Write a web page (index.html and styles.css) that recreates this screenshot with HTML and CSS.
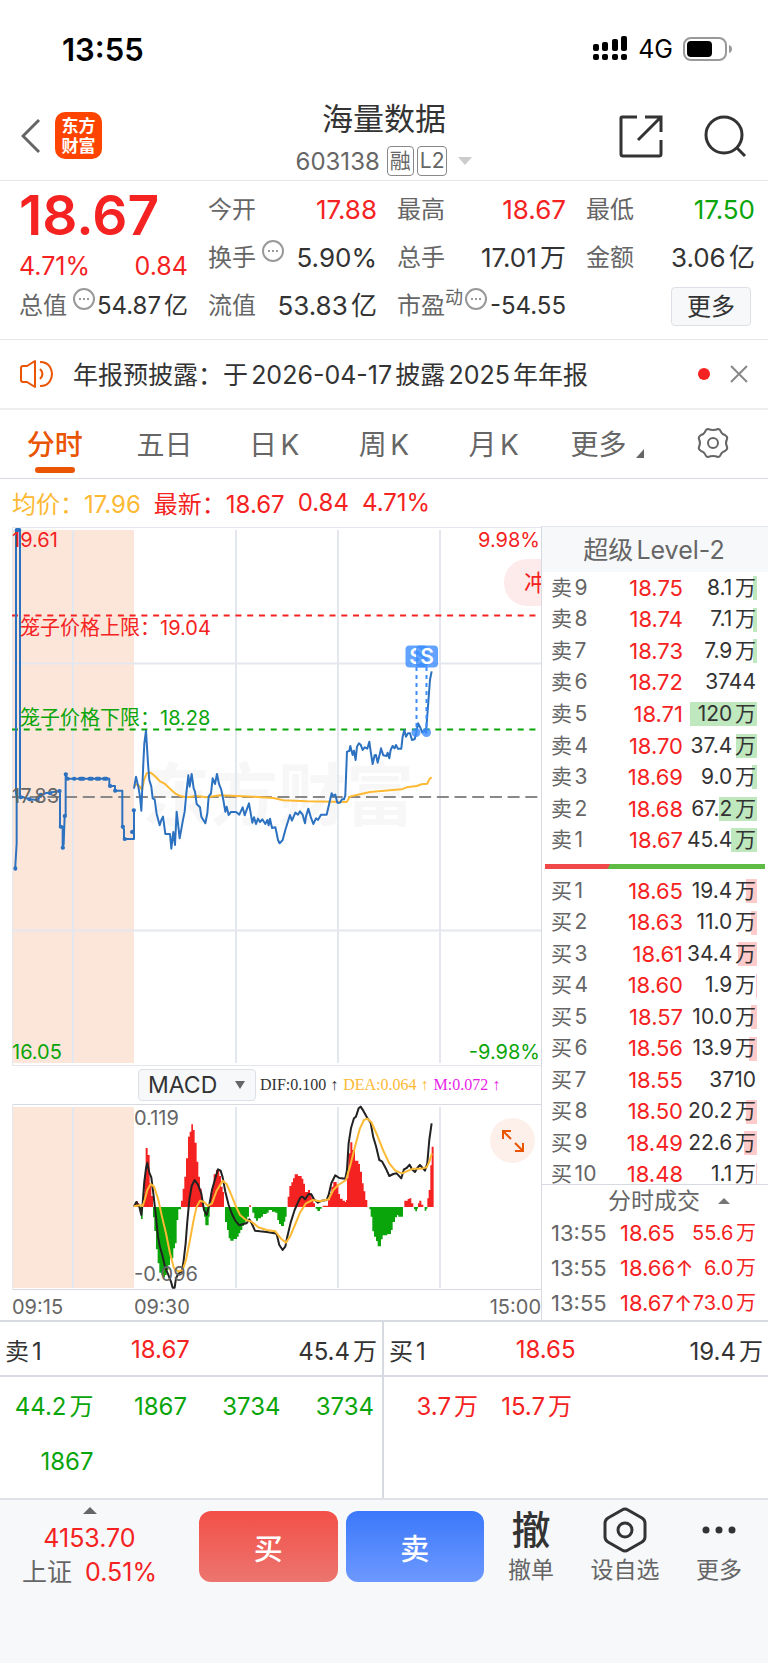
FILE: index.html
```html
<!DOCTYPE html>
<html lang="zh-CN">
<head>
    <meta charset="UTF-8">
    <meta name="viewport" content="width=device-width, initial-scale=1.0">
    <title>海量数据 603138</title>
    <link rel="stylesheet" href="styles.css">
</head>
<body>
    <div class="status">
        <span class="clock">13:55</span>
        <div class="status-right">
            <svg class="signal" viewBox="0 0 35 26" aria-hidden="true">
                <rect x="0" y="8" width="6" height="7" rx="2"/><rect x="9" y="6" width="6" height="9" rx="2"/><rect x="19" y="3" width="6" height="12" rx="2"/><rect x="28" y="0" width="6" height="15" rx="2"/>
                <rect x="0" y="18" width="6" height="6" rx="2"/><rect x="9" y="18" width="6" height="6" rx="2"/><rect x="19" y="18" width="6" height="6" rx="2"/><rect x="28" y="18" width="6" height="6" rx="2"/>
            </svg>
            <span class="network">4G</span>
            <svg class="battery" viewBox="0 0 49 24" aria-hidden="true">
                <rect x="1" y="1" width="42" height="22" rx="7" fill="none" stroke="#999" stroke-width="2"/>
                <rect x="4" y="4" width="25" height="16" rx="4"/>
                <path d="M46 8q3 1 3 4t-3 4z" fill="#999"/>
            </svg>
        </div>
    </div>

    <header class="header">
        <div class="header-side">
            <button class="icon-button back" aria-label="返回">
                <svg width="20" height="36" viewBox="0 0 20 36"><path d="M18 2L2 18l16 16" fill="none" stroke="#666" stroke-width="3"/></svg>
            </button>
            <div class="logo"><span>东方</span><span>财富</span></div>
        </div>
        <div class="stock">
            <h1 class="stock-name">海量数据</h1>
            <div class="stock-code">
                <span class="stock-number">603138</span><span class="badge">融</span><span class="badge">L2</span>
                <svg class="stock-arrow" width="14" height="8" viewBox="0 0 14 8"><path d="M0 0h14L7 8z" fill="#ccc"/></svg>
            </div>
        </div>
        <div class="header-side header-actions">
            <button class="icon-button" aria-label="分享">
                <svg width="44" height="44" viewBox="0 0 44 44" fill="none" stroke="#333" stroke-width="3"><path d="M18 3H3q-1 0-1 1v36q0 2 2 2h36q2 0 2-2V26M26 3h16v15M42 3L19 26"/></svg>
            </button>
            <button class="icon-button" aria-label="搜索">
                <svg width="44" height="44" viewBox="0 0 44 44" fill="none" stroke="#333" stroke-width="3"><circle cx="21" cy="21" r="18"/><path d="M33 33l9 9"/></svg>
            </button>
        </div>
    </header>

    <section class="quote">
        <div class="quote-col">
            <div class="price red">18.67</div>
            <div class="quote-change red"><span>4.71%</span><span>0.84</span></div>
            <div class="quote-row small"><span class="label">总值<svg class="more-dot" viewBox="0 0 22 22"><circle cx="11" cy="11" r="10"/><path d="M6 11h2M10 11h2M14 11h2"/></svg></span><span>54.87亿</span></div>
        </div>
        <div class="quote-col">
            <div class="quote-row"><span class="label">今开</span><span class="red">17.88</span></div>
            <div class="quote-row"><span class="label">换手<svg class="more-dot wide" viewBox="0 0 22 22"><circle cx="11" cy="11" r="10"/><path d="M6 11h2M10 11h2M14 11h2"/></svg></span><span>5.90%</span></div>
            <div class="quote-row"><span class="label">流值</span><span>53.83亿</span></div>
        </div>
        <div class="quote-col">
            <div class="quote-row"><span class="label">最高</span><span class="red">18.67</span></div>
            <div class="quote-row"><span class="label">总手</span><span>17.01万</span></div>
            <div class="quote-row small"><span class="label">市盈<sup>动</sup><svg class="more-dot tight" viewBox="0 0 22 22"><circle cx="11" cy="11" r="10"/><path d="M6 11h2M10 11h2M14 11h2"/></svg></span><span>-54.55</span></div>
        </div>
        <div class="quote-col">
            <div class="quote-row"><span class="label">最低</span><span class="green">17.50</span></div>
            <div class="quote-row"><span class="label">金额</span><span>3.06亿</span></div>
            <div class="quote-row quote-more"><button class="more-button">更多</button></div>
        </div>
    </section>

    <section class="notice">
        <svg width="34" height="30" viewBox="0 0 34 30" fill="none" stroke="#ea5504" stroke-width="2"><path d="M15 2v26l-8-5H3q-2 0-2-2V9q0-2 2-2h4z" stroke-linejoin="round"/><path d="M20 10q5 5 0 10M20 3q7 0 10 5 4 7 0 14-3 5-10 5"/></svg>
        <span class="notice-text">年报预披露：于2026-04-17披露2025年年报</span>
        <span class="notice-dot"></span>
        <button class="icon-button" aria-label="关闭">
            <svg width="18" height="18" viewBox="0 0 18 18" stroke="#888" stroke-width="2"><path d="M1 1l16 16M17 1L1 17"/></svg>
        </button>
    </section>

    <nav class="tabs">
        <button class="tab active">分时</button>
        <button class="tab">五日</button>
        <button class="tab">日K</button>
        <button class="tab">周K</button>
        <button class="tab">月K</button>
        <button class="tab tab-more">更多<svg width="8" height="9" viewBox="0 0 8 9"><path d="M8 0v9H0z" fill="#666"/></svg></button>
        <button class="tab" aria-label="设置">
            <svg width="34" height="34" viewBox="0 0 34 34" fill="none" stroke="#666" stroke-width="2"><path d="M12 3q5 2 10 0 2 0 3 3 1 2 4 3 3 2 2 4-2 4 0 8 1 2-2 4-3 1-4 3-1 3-3 3-5-2-10 0-2 0-3-3-1-2-4-3-3-2-2-4 2-4 0-8-1-2 2-4 3-1 4-3 1-3 3-3z"/><circle cx="17" cy="17" r="5"/></svg>
        </button>
    </nav>

    <div class="summary">
        <span class="amber">均价：17.96</span>
        <span class="red">最新：18.67</span>
        <span class="red">0.84</span>
        <span class="red">4.71%</span>
    </div>

    <main class="board">
        <div class="charts">
            <svg class="chart" viewBox="0 0 529 540">
                <rect x="0" y="4" width="122" height="533" fill="#fce6da"/>
                <text x="130" y="294" class="watermark">东方财富</text>
                <g class="grid">
                    <path d="M0 1.500H529M0 539.500H529M.5 1V540"/>
                    <path d="M61 4V537M224 4V537M326 4V537M428 4V537M0 137.500H529M0 404.500H529" stroke-width="2"/>
                </g>
                <path d="M0 89.500H527" class="limit" stroke="#f52222"/>
                <path d="M0 203.500H527" class="limit" stroke="#0aa50a"/>
                <path d="M0 271H527" stroke="#888" stroke-width="2" stroke-dasharray="12 5.700"/>

                <g transform="translate(-12 -16) scale(.3333)">
                    <path class="line pre" d="M46 1075L46 1068 50 1000 50 862 48 850V60H60V862L70 862 90 868 112 870 120 860 135 850 180 843V950H188V1013L191 1003 194 918 197 915V793L202 806H328V828H345V842H367V950L372 958V987H402V962H396M402 965V900"/>
                    <path class="ticks-pre" d="M46 1075v1M50 60h8M62 862h1M88 868h1M112 870h1M122 854h1M150 850h1M178 843h1M182 950h1M188 1013h1M194 918h1M197 793h1M202 806h1M222 806h1M240 806h10M268 806h8M290 806h8M312 806h8M330 828h1M345 842h1M368 950h1M374 987h1M396 966h1M401 901h1"/>
                </g>
                <g transform="translate(108 114) scale(.3333)">
                    <path class="line avg" d="M42 440L50 432 58 438 66 450 72 420 80 400 92 398 102 406 120 424 135 432 150 446 165 460 180 468 200 472 230 468 260 472 300 466 400 470 460 474 490 481 560 484 680 486 690 470 710 465 750 456 845 448 860 442 890 438 905 433 922 431 928 418 935 412"/>
                    <path class="line now" d="M42 446L48 410 55 440 60 470 64 512 70 370 73 310 78 272 84 370 88 420 94 440 98 475 104 478 110 522 119 556 124 540 129 530 136 582 150 582 154 626 160 576 165 615 170 515 179 595 188 545 194 515 199 460 205 406 209 440 215 402 221 445 225 455 230 492 240 502 244 530 256 550 262 520 266 470 273 460 278 415 285 432 291 402 297 432 304 450 310 480 316 515 320 500 326 525 333 516 348 516 358 524 368 502 374 526 387 490 397 548 402 532 408 552 414 536 420 546 427 538 436 552 442 540 446 556 450 536 456 564 466 562 470 580 474 600 479 610 488 600 496 570 510 525 516 542 526 518 534 524 540 514 548 524 555 550 558 530 565 506 572 530 580 552 588 535 594 540 603 524 620 524 628 490 635 460 640 468 646 464 652 488 660 488 666 478 672 478 676 466 681 335 688 333 691 318 698 345 702 332 707 360 711 320 717 310 722 314 728 330 734 322 742 326 748 305 753 340 758 372 764 346 768 345 773 368 780 340 783 325 790 346 800 348 803 338 808 355 812 330 818 318 824 325 828 315 834 326 844 326 848 290 853 270 858 290 864 280 870 280 876 300 884 298 889 278 894 250 902 265 907 278 914 270 918 278 924 200 930 120 935 94"/>
                </g>

                <text x="0" y="21" class="axis red">19.61</text>
                <text x="528" y="21" class="axis red end">9.98%</text>
                <text x="8" y="109" class="cage red">笼子价格上限：19.04</text>
                <text x="8" y="199" class="cage green">笼子价格下限：18.28</text>
                <text x="0" y="277" class="axis gray">17.83</text>
                <text x="0" y="533" class="axis green">16.05</text>
                <text x="528" y="533" class="axis green end">-9.98%</text>

                <path d="M404.500 141V204M414.500 141V204" stroke="#3b8cff" stroke-width="2" stroke-dasharray="4 4"/>
                <g fill="#3b8cff" fill-opacity=".8">
                    <circle cx="404" cy="206.500" r="4.500"/><circle cx="414.500" cy="206.500" r="4.500"/>
                    <rect x="393.500" y="119.500" width="22" height="22" rx="4"/>
                </g>
                <text x="404" y="138" class="trade">S</text>
                <rect x="404" y="119.500" width="22" height="22" rx="4" fill="#3b8cff" fill-opacity=".8"/>
                <text x="415" y="138" class="trade">S</text>
                <rect x="492" y="33" width="90" height="47" rx="23" fill="#fdebec"/>
                <text x="512" y="65" class="pill red">冲</text>
            </svg>

            <div class="indicator">
                <select class="indicator-select" aria-label="指标">
                    <option>MACD</option>
                </select>
                <div class="indicator-values">
                    <span>DIF:0.100 ↑</span>
                    <span class="amber">DEA:0.064 ↑</span>
                    <span class="magenta">M:0.072 ↑</span>
                </div>
            </div>

            <div class="macd">
                <svg class="chart" viewBox="0 0 529 186">
                    <rect x="0" y="3" width="122" height="181" fill="#fce6da"/>
                    <g class="grid">
                        <path d="M0 .5H529M0 185.500H529" stroke="#d8dae2"/>
                        <path d="M.5 0V186"/>
                        <path d="M61 3V184M224 3V184M326 3V184M428 3V184" stroke-width="2"/>
                    </g>
                    <!-- histogram, first half of the session -->
                    <g transform="translate(-12 -64) scale(.3333)">
                        <path fill="#f52222" d="M404 501V492H408V484H414V490H418V501ZM430 501V460H433V410H437V324H443V345H449V430H454V468H459V501ZM543 501V482H548V446H553V410H558V355H564V290H569V275H574V253H579V270H584V308H590V365H595V410H600V446H605V480H610V501ZM629 501V490H632V458H637V436H641V403H648V390H658V408H663V440H668V456H672V501ZM748 501V496H753V501Z"/>
                        <path fill="#0aa50a" d="M420 501V515H423V537H428V501ZM459 501V532H463V573H468V628H473V670H478V698H484V705H489V712H495V705H500V690H505V675H510V655H520V625H525V610H530V540H535V508H543V501ZM612 501V530H616V556H626V530H629V501ZM675 501V546H681V570H686V595H691V602H701V597H711V590H716V580H721V570H727V558H732V552H737V542H742V530H747V501ZM757 501V518H763V535H768V542H774V535H783V530H789V522H800V518H806V510H816V515H826V518H832V540H837V552H843V558H852V545H856V530H860V501Z"/>
                    </g>
                    <!-- histogram, second half -->
                    <g transform="translate(238 -44) scale(.3333)">
                        <path fill="#f52222" d="M113 441V410H118V378H124V367H129V355H134V343H144V348H155V356H160V371H165V396H174V390H180V400H185V415H190V430H195V441ZM218 441V437H234V421H239V400H244V380H250V366H260V374H265V402H270V416H278V422H285V426H288V420H291V355H295V280H301V247H307V270H315V302H325V312H330V335H336V370H341V394H346V420H352V441ZM463 441V422H473V417H478V415H484V430H490V441ZM504 441V430H508V422H514V434H520V441ZM532 441V415H536V390H541V316H545V260H551V441Z"/>
                        <path fill="#0aa50a" d="M197 441V446H202V453H210V446H215V441ZM358 441V448H362V470H367V514H372V530H378V543H383V559H393V538H398V526H412V522H423V510H428V486H435V472H441V465H445V470H459V441ZM492 441V448H496V454H501V446H504V441ZM524 441V452H529V446H532V441Z"/>
                    </g>
                    <text x="122" y="21" class="axis gray">0.119</text>
                    <g transform="translate(-12 -64) scale(.3333)">
                        <path class="line dif" d="M402 500L409 486 418 500 424 525 428 490 433 425 438 385 442 368 448 398 454 412 460 460 468 530 474 590 480 622 487 645 495 680 505 705 513 725 518 743 524 743 528 715 536 700 545 695 550 670 557 610 562 545 568 480 575 438 584 420 594 434 604 460 612 510 620 525 628 495 636 450 646 415 654 388 662 392 668 412 676 455 686 495 696 522 706 542 718 556 730 552 740 550 748 538 756 552 765 572 780 574 800 576 824 580 830 582 838 615 848 630 856 620 862 590 872 548 884 510 895 485 902 472 908 470 915 478 926 462 934 463 942 478 954 488 966 482 980 480 986 465 994 430 1006 406 1018 414 1036 416 1041 390 1046 310 1053 265 1062 235 1068 230 1076 205 1082 200 1090 212 1102 234 1112 248 1120 292 1128 318 1138 360 1146 364 1158 386 1168 408 1180 402 1190 400 1204 415 1212 388 1220 384 1229 374 1236 388 1245 396 1252 384 1260 375 1270 386 1275 392 1282 370 1288 300 1295 250"/>
                        <path class="line avg" d="M402 499L420 496 428 498 434 480 442 450 452 432 462 440 474 475 486 530 498 580 510 640 522 685 535 695 548 690 558 660 570 600 580 545 590 500 600 482 612 486 624 498 636 490 650 452 668 422 680 432 692 460 706 495 720 525 738 540 755 545 775 562 800 570 826 574 845 598 858 608 870 590 885 555 900 518 918 490 938 480 960 484 986 478 1000 450 1015 435 1038 420 1050 380 1065 320 1080 265 1092 240 1102 236 1114 246 1130 282 1150 332 1168 370 1186 392 1206 400 1220 394 1240 386 1265 386 1280 382 1288 365 1296 340"/>
                    </g>
                    <text x="122" y="177" class="axis gray">-0.096</text>
                </svg>
                <button class="expand" aria-label="放大">
                    <svg width="24" height="24" viewBox="0 0 24 24" fill="none" stroke="#ea5504" stroke-width="2"><path d="M10 2H2v8M2 2l8 8M14 22h8v-8M22 22l-8-8"/></svg>
                </button>
            </div>

            <div class="times"><span>09:15</span><span class="open">09:30</span><span>15:00</span></div>
        </div>

        <aside class="depth">
            <h2 class="depth-title">超级Level-2</h2>
            <table class="levels asks">
                <tr><th>卖9</th><td class="red">18.75</td><td><i style="width: 4px"></i>8.1万</td></tr>
                <tr><th>卖8</th><td class="red">18.74</td><td><i style="width: 4px"></i>7.1万</td></tr>
                <tr><th>卖7</th><td class="red">18.73</td><td><i style="width: 4px"></i>7.9万</td></tr>
                <tr><th>卖6</th><td class="red">18.72</td><td>3744</td></tr>
                <tr><th>卖5</th><td class="red">18.71</td><td><i style="width: 67px"></i>120万</td></tr>
                <tr><th>卖4</th><td class="red">18.70</td><td><i style="width: 21px"></i>37.4万</td></tr>
                <tr><th>卖3</th><td class="red">18.69</td><td><i style="width: 5px"></i>9.0万</td></tr>
                <tr><th>卖2</th><td class="red">18.68</td><td><i style="width: 38px"></i>67.2万</td></tr>
                <tr><th>卖1</th><td class="red">18.67</td><td><i style="width: 26px"></i>45.4万</td></tr>
            </table>
            <div class="ratio"></div>
            <div class="bids-clip">
                <table class="levels bids">
                    <tr><th>买1</th><td class="red">18.65</td><td><i style="width: 11px"></i>19.4万</td></tr>
                    <tr><th>买2</th><td class="red">18.63</td><td><i style="width: 6px"></i>11.0万</td></tr>
                    <tr><th>买3</th><td class="red">18.61</td><td><i style="width: 19px"></i>34.4万</td></tr>
                    <tr><th>买4</th><td class="red">18.60</td><td><i style="width: 1px"></i>1.9万</td></tr>
                    <tr><th>买5</th><td class="red">18.57</td><td><i style="width: 6px"></i>10.0万</td></tr>
                    <tr><th>买6</th><td class="red">18.56</td><td><i style="width: 8px"></i>13.9万</td></tr>
                    <tr><th>买7</th><td class="red">18.55</td><td>3710</td></tr>
                    <tr><th>买8</th><td class="red">18.50</td><td><i style="width: 11px"></i>20.2万</td></tr>
                    <tr><th>买9</th><td class="red">18.49</td><td><i style="width: 13px"></i>22.6万</td></tr>
                    <tr><th>买10</th><td class="red">18.48</td><td><i style="width: 1px"></i>1.1万</td></tr>
                </table>
            </div>
            <h2 class="ticks-title">分时成交<svg width="12" height="6" viewBox="0 0 12 6"><path d="M6 0l6 6H0z" fill="#777"/></svg></h2>
            <table class="ticks">
                <tr><th>13:55</th><td>18.65</td><td>55.6万</td></tr>
                <tr><th>13:55</th><td>18.66↑</td><td>6.0万</td></tr>
                <tr><th>13:55</th><td>18.67↑</td><td>73.0万</td></tr>
            </table>
        </aside>
    </main>

    <section class="queues">
        <div class="queue">
            <div class="queue-head"><span>卖1</span><span class="red">18.67</span><span>45.4万</span></div>
            <div class="queue-orders green"><span>44.2万</span><span>1867</span><span>3734</span><span>3734</span><span>1867</span></div>
        </div>
        <div class="queue">
            <div class="queue-head"><span>买1</span><span class="red">18.65</span><span>19.4万</span></div>
            <div class="queue-orders red"><span>3.7万</span><span>15.7万</span></div>
        </div>
    </section>

    <footer class="footer">
        <div class="index">
            <svg width="14" height="7" viewBox="0 0 14 7"><path d="M7 0l7 7H0z" fill="#666"/></svg>
            <span class="red">4153.70</span>
            <span class="index-name">上证 <b class="red">0.51%</b></span>
        </div>
        <button class="trade-button buy">买</button>
        <button class="trade-button sell">卖</button>
        <button class="action"><span class="action-icon">撤</span>撤单</button>
        <button class="action">
            <span class="action-icon"><svg width="44" height="46" viewBox="0 0 44 46" fill="none" stroke="#333" stroke-width="3"><path d="M19 3q3-2 6 0l14 8q3 2 3 5v14q0 3-3 5l-14 8q-3 2-6 0L5 35q-3-2-3-5V16q0-3 3-5z"/><circle cx="22" cy="23" r="7"/></svg></span>设自选
        </button>
        <button class="action">
            <span class="action-icon"><svg width="34" height="8" viewBox="0 0 34 8" fill="#333"><circle cx="4" cy="4" r="3.500"/><circle cx="17" cy="4" r="3.500"/><circle cx="30" cy="4" r="3.500"/></svg></span>更多
        </button>
    </footer>
</body>
</html>
```

FILE: styles.css
```css
* {
    box-sizing: border-box;
}

body {
    margin: 0;
    min-height: 100vh;
    display: flex;
    flex-direction: column;
    font-family: Inter, "Noto Sans CJK SC", sans-serif;
    font-size: 24px;
    color: #333;
    background-color: #fff;
    text-autospace: normal;
}

button {
    font: inherit;
    color: inherit;
    background: none;
    border: none;
    padding: 0;
}

svg {
    display: block;
    flex-shrink: 0;
}

h1, h2 {
    margin: 0;
    font-weight: 400;
}

.red {
    color: #f52222;
    fill: #f52222;
}

.green {
    color: #0aa50a;
    fill: #0aa50a;
}

.amber {
    color: #fdb933;
}

.magenta {
    color: #e61ee6;
}

.gray {
    fill: #666;
}

/* status bar */
.status {
    display: flex;
    justify-content: space-between;
    align-items: center;
    height: 94px;
    padding: 4px 36px 0 62px;
    color: #000;
}

.clock {
    font-size: 31px;
    font-weight: 600;
}

.status-right {
    display: flex;
    align-items: center;
    gap: 10px;
}

.signal {
    width: 35px;
    height: 26px;
}

.battery {
    width: 49px;
    height: 24px;
}

.network {
    font-size: 25px;
}

/* header */
.header {
    display: grid;
    grid-template-columns: 1fr auto 1fr;
    align-items: center;
    height: 87px;
    padding: 0 21px;
    border-bottom: 1px solid #e6e6e6;
}

.header-side {
    display: flex;
    align-items: center;
    gap: 14px;
    padding-bottom: 3px;
}

.header-actions {
    justify-content: flex-end;
    gap: 40px;
}

.logo {
    display: flex;
    flex-direction: column;
    justify-content: center;
    align-items: center;
    width: 47px;
    height: 47px;
    border-radius: 10px;
    background-color: #ff4400;
    color: #fff;
    font-size: 17px;
    font-weight: 700;
    line-height: 20px;
}

.stock {
    display: flex;
    flex-direction: column;
    align-items: center;
    padding-top: 2px;
}

.stock-name {
    font-size: 31px;
    line-height: 46px;
}

.stock-code {
    display: flex;
    align-items: center;
    gap: 3px;
    height: 38px;
    color: #666;
}

.stock-number {
    margin-right: 4px;
}

.badge {
    height: 30px;
    padding: 0 2px;
    border: 1px solid #888;
    border-radius: 4px;
    font-size: 21px;
    line-height: 28px;
}

.stock-arrow {
    margin-left: 8px;
}

/* quote */
.quote {
    display: grid;
    grid-template-columns: repeat(4, 1fr);
    gap: 20px;
    padding: 5px 13px 9px 19px;
    border-bottom: 1px solid #e6e6e6;
}

.price {
    font-size: 55px;
    font-weight: 600;
    line-height: 58px;
}

.quote-change,
.quote-row {
    display: flex;
    justify-content: space-between;
    align-items: center;
    height: 48px;
    font-size: 26px;
    line-height: 36px;
    white-space: nowrap;
}

.quote-change {
    height: 38px;
    padding-top: 6px;
    font-size: 25px;
}

.small {
    font-size: 24px;
}

.label {
    display: flex;
    font-size: 24px;
    color: #666;
}

.label sup {
    font-size: 18px;
    line-height: 20px;
}

.more-dot {
    width: 22px;
    height: 22px;
    margin-left: 6px;
    fill: none;
    stroke: #999;
    stroke-width: 2;
}

.more-dot.tight {
    margin-left: 2px;
}

.quote-more {
    justify-content: flex-end;
    padding-right: 4px;
}

.more-button {
    width: 80px;
    height: 39px;
    border: 1px solid #dde0e6;
    border-radius: 4px;
    background-color: #f6f8fa;
    font-size: 24px;
    line-height: 35px;
}

/* notice */
.notice {
    display: flex;
    align-items: center;
    height: 70px;
    padding: 0 20px;
    border-bottom: 2px solid #eee;
}

.notice-text {
    flex: 1;
    margin-left: 19px;
    padding-bottom: 3px;
    font-size: 25px;
    white-space: nowrap;
}

.notice-dot {
    width: 12px;
    height: 12px;
    margin-right: 20px;
    border-radius: 50%;
    background-color: #f52222;
}

/* tabs */
.tabs {
    display: grid;
    grid-template-columns: repeat(7, 1fr);
    height: 69px;
    border-bottom: 1px solid #d8dae2;
}

.tab {
    position: relative;
    display: flex;
    justify-content: center;
    align-items: center;
    padding-bottom: 3px;
    font-size: 28px;
    color: #666;
}

.tab.active {
    color: #ea5504;
    font-weight: 500;
}

.tab.active::after {
    content: '';
    position: absolute;
    bottom: 5px;
    width: 40px;
    height: 6px;
    border-radius: 3px;
    background-color: #ea5504;
}

.tab-more {
    padding-left: 8px;
}

.tab-more svg {
    margin: 22px 0 0 10px;
}

.summary {
    display: flex;
    align-items: center;
    gap: 13px;
    height: 47px;
    padding: 0 12px;
}

/* charts and order book */
.board {
    display: grid;
    grid-template-columns: 1fr 227px;
}

.charts {
    padding-left: 12px;
}

.chart {
    width: 100%;
    height: auto;
}

.grid {
    fill: none;
    stroke: #e4e7ed;
}

.limit {
    stroke-width: 2;
    stroke-dasharray: 6 5.760;
}

.line {
    fill: none;
    stroke-width: 2;
    stroke-linejoin: round;
    vector-effect: non-scaling-stroke;
}

.now {
    stroke: #2d72c0;
}

.pre {
    stroke: #2d72c0;
}

.ticks-pre {
    fill: none;
    stroke: #2d72c0;
    stroke-width: 12;
    stroke-linecap: round;
}

.avg {
    stroke: #fdb933;
}

.dif {
    stroke: #222;
}

.axis {
    font-size: 20px;
}

.cage {
    font-size: 20px;
}

.end {
    text-anchor: end;
}

.watermark {
    font-size: 68px;
    font-weight: 700;
    fill: #f7f7f7;
}

.trade {
    font-size: 21px;
    font-weight: 600;
    fill: #fff;
    text-anchor: middle;
}

.pill {
    font-size: 23px;
}

.indicator {
    display: flex;
    align-items: center;
    gap: 4px;
    height: 38px;
    padding-left: 126px;
}

.indicator-select {
    appearance: none;
    width: 118px;
    height: 32px;
    padding: 0 0 0 9px;
    border: 1px solid #dde0e6;
    border-radius: 4px;
    background: #f6f8fa url("data:image/svg+xml,%3Csvg xmlns='http://www.w3.org/2000/svg' width='10' height='8'%3E%3Cpath d='M0 0h10L5 8z' fill='%23666'/%3E%3C/svg%3E") no-repeat right 10px center;
    font-family: inherit;
    font-size: 23px;
    color: #333;
}

.indicator-values {
    display: flex;
    gap: 5px;
    font-family: "Liberation Serif", serif;
    font-size: 16px;
    white-space: nowrap;
}

.macd {
    position: relative;
}

.expand {
    position: absolute;
    top: 14px;
    right: 6px;
    display: flex;
    justify-content: center;
    align-items: center;
    width: 45px;
    height: 45px;
    border-radius: 50%;
    background-color: #fdf0ea;
}

.times {
    display: flex;
    height: 30px;
    font-size: 20px;
    line-height: 34px;
    color: #666;
}

.times span {
    width: 122px;
}

.times .open {
    flex: 1;
}

.times span:last-child {
    text-align: right;
}

.depth {
    border-left: 1px solid #d8dae2;
}

.depth-title {
    height: 46px;
    border-top: 1px solid #e4e7ed;
    background-color: #f6f8fa;
    font-size: 25px;
    line-height: 46px;
    color: #666;
    text-align: center;
    padding-right: 2px;
}

table {
    border-collapse: collapse;
    table-layout: fixed;
    width: 100%;
    font-size: 21px;
    line-height: 24px;
    white-space: nowrap;
}

th,
td {
    padding: 0;
    font-weight: 400;
    text-align: right;
}

th {
    color: #666;
    text-align: left;
    padding-left: 9px;
}

.levels th {
    width: 70px;
}

.levels td:nth-child(2) {
    width: 71px;
    font-size: 22px;
}

.levels td:last-child {
    position: relative;
    padding-right: 12px;
}

.levels i {
    position: absolute;
    z-index: -1;
    top: 4px;
    right: 11px;
    height: 24px;
    background-color: #bfe8bf;
}

.bids i {
    background-color: #ffcaca;
}

.asks {
    height: 284px;
}

.ratio {
    height: 5px;
    margin: 8px 3px 6px;
    background: linear-gradient(120deg, #f04848 56px, #5dbb46 57px);
}

.bids-clip {
    height: 309px;
    overflow: hidden;
}

.bids {
    height: 315px;
}

.ticks-title {
    display: flex;
    justify-content: center;
    align-items: center;
    gap: 18px;
    height: 32px;
    padding-left: 28px;
    border-top: 1px solid #d8dae2;
    font-size: 23px;
    line-height: 30px;
    color: #666;
}

.ticks {
    height: 104px;
    color: #f52222;
}

.ticks th {
    width: 78px;
    font-size: 22px;
}

.ticks td:nth-child(2) {
    width: 70px;
    font-size: 22px;
    text-align: left;
}

.ticks td:last-child {
    padding-right: 12px;
    font-size: 20px;
}

/* order queues */
.queues {
    display: grid;
    grid-template-columns: 1fr 1fr;
    border-top: 2px solid #d8dae2;
    border-bottom: 2px solid #e0e2e8;
}

.queue:first-child {
    border-right: 2px solid #d8dae2;
}

.queue-head {
    display: grid;
    grid-template-columns: 1fr 1fr 1fr;
    align-items: center;
    height: 55px;
    padding: 2px 5px 0;
    border-bottom: 2px solid #d8dae2;
}

.queue-head span:nth-child(2) {
    padding-left: 2px;
}

.queue-head span:last-child {
    text-align: right;
}

.queue-orders {
    display: grid;
    grid-template-columns: repeat(4, 1fr);
    height: 121px;
    padding: 2px 8px 9px 0;
    line-height: 55px;
    text-align: right;
}

/* footer */
.footer {
    flex: 1;
    display: flex;
    align-items: flex-start;
    padding: 7px 2px 0 0;
    background-color: #f6f8fa;
}

.index {
    display: flex;
    flex-direction: column;
    align-items: center;
    width: 199px;
    padding-right: 8px;
    font-size: 25px;
    line-height: 34px;
}

.index {
    padding-right: 20px;
}

.index svg {
    margin-bottom: 7px;
}

.index-name {
    color: #666;
    white-space: pre;
}

.index b {
    margin-left: 6px;
    font-weight: 400;
}

.trade-button {
    flex: 1;
    height: 71px;
    margin-top: 4px;
    border-radius: 12px;
    color: #fff;
    font-size: 29px;
    font-weight: 500;
}

.buy {
    margin-right: 8px;
    background: linear-gradient(#f25048, #ec756f);
}

.sell {
    background: linear-gradient(#3b78fa, #6d99ff);
}

.action {
    display: flex;
    flex-direction: column;
    align-items: center;
    width: 94px;
    font-size: 23px;
    line-height: 34px;
    color: #666;
}

.action-icon {
    display: flex;
    justify-content: center;
    align-items: center;
    height: 46px;
    font-size: 39px;
    font-weight: 500;
    color: #333;
}
```
